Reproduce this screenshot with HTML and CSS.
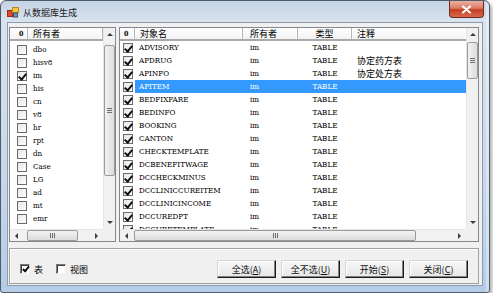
FILE: index.html
```html
<!DOCTYPE html>
<html lang="zh-CN">
<head>
    <meta charset="UTF-8">
    <title>从数据库生成</title>
    <link rel="stylesheet" href="styles.css">
</head>
<body>
    <div class="window">
        <!-- Title bar -->
        <div class="titlebar">
            <svg class="app-icon" width="12" height="11" viewBox="0 0 12 11">
                <rect x="0.5" y="3.5" width="5" height="6" fill="#e0452c" stroke="#9c2a17"/>
                <rect x="5.5" y="0.5" width="6" height="5" fill="#f6c636" stroke="#b78c12"/>
                <rect x="6.5" y="6" width="4" height="4" fill="#6f8fb8" stroke="#40587a"/>
            </svg>
            <span class="title">从数据库生成</span>
            <div class="close-btn">
                <svg width="11" height="9" viewBox="0 0 11 9">
                    <path d="M2 1.5 L9 7.5 M9 1.5 L2 7.5" stroke="#fff" stroke-width="2.2" stroke-linecap="round"/>
                </svg>
            </div>
        </div>

        <div class="client">
            <div class="lists">
                <!-- Owners -->
                <div class="listview owners">
                    <div class="view">
                        <div class="lv-header">
                            <div class="hcol">0</div>
                            <div class="hcol">所有者</div>
                        </div>
                        <div class="lv-body">
                            <div class="lv-row"><span class="cell c-check"><span class="chk"></span></span><span class="cell">dbo</span></div>
                            <div class="lv-row"><span class="cell c-check"><span class="chk"></span></span><span class="cell">hisv8</span></div>
                            <div class="lv-row"><span class="cell c-check"><span class="chk on"></span></span><span class="cell">im</span></div>
                            <div class="lv-row"><span class="cell c-check"><span class="chk"></span></span><span class="cell">his</span></div>
                            <div class="lv-row"><span class="cell c-check"><span class="chk"></span></span><span class="cell">cn</span></div>
                            <div class="lv-row"><span class="cell c-check"><span class="chk"></span></span><span class="cell">v8</span></div>
                            <div class="lv-row"><span class="cell c-check"><span class="chk"></span></span><span class="cell">hr</span></div>
                            <div class="lv-row"><span class="cell c-check"><span class="chk"></span></span><span class="cell">rpt</span></div>
                            <div class="lv-row"><span class="cell c-check"><span class="chk"></span></span><span class="cell">dn</span></div>
                            <div class="lv-row"><span class="cell c-check"><span class="chk"></span></span><span class="cell">Case</span></div>
                            <div class="lv-row"><span class="cell c-check"><span class="chk"></span></span><span class="cell">LG</span></div>
                            <div class="lv-row"><span class="cell c-check"><span class="chk"></span></span><span class="cell">ad</span></div>
                            <div class="lv-row"><span class="cell c-check"><span class="chk"></span></span><span class="cell">mt</span></div>
                            <div class="lv-row"><span class="cell c-check"><span class="chk"></span></span><span class="cell">emr</span></div>
                        </div>
                    </div>
                    <div class="vscroll">
                        <div class="sb-btn up"></div>
                        <div class="sb-track"><div class="thumb v-thumb" style="margin-top: 4px; height: 131px;"><span class="grip"></span></div></div>
                        <div class="sb-btn down"></div>
                    </div>
                    <div class="hscroll">
                        <div class="sb-btn left"></div>
                        <div class="sb-track"><div class="thumb h-thumb" style="margin-left: 4px; width: 51px;"><span class="grip"></span></div></div>
                        <div class="sb-btn right"></div>
                    </div>
                    <div class="corner"></div>
                </div>

                <!-- Objects -->
                <div class="listview objects">
                    <div class="view">
                        <div class="lv-header">
                            <div class="hcol">0</div>
                            <div class="hcol">对象名</div>
                            <div class="hcol">所有者</div>
                            <div class="hcol center">类型</div>
                            <div class="hcol last">注释</div>
                        </div>
                        <div class="lv-body">
                            <div class="lv-row"><span class="cell c-check"><span class="chk on"></span></span><span class="cell">ADVISORY</span><span class="cell">im</span><span class="cell center">TABLE</span><span class="cell"></span></div>
                            <div class="lv-row"><span class="cell c-check"><span class="chk on"></span></span><span class="cell">APDRUG</span><span class="cell">im</span><span class="cell center">TABLE</span><span class="cell cjk">协定药方表</span></div>
                            <div class="lv-row"><span class="cell c-check"><span class="chk on"></span></span><span class="cell">APINFO</span><span class="cell">im</span><span class="cell center">TABLE</span><span class="cell cjk">协定处方表</span></div>
                            <div class="lv-row sel"><span class="cell c-check"><span class="chk on"></span></span><span class="cell">APITEM</span><span class="cell">im</span><span class="cell center">TABLE</span><span class="cell"></span></div>
                            <div class="lv-row"><span class="cell c-check"><span class="chk on"></span></span><span class="cell">BEDFIXFARE</span><span class="cell">im</span><span class="cell center">TABLE</span><span class="cell"></span></div>
                            <div class="lv-row"><span class="cell c-check"><span class="chk on"></span></span><span class="cell">BEDINFO</span><span class="cell">im</span><span class="cell center">TABLE</span><span class="cell"></span></div>
                            <div class="lv-row"><span class="cell c-check"><span class="chk on"></span></span><span class="cell">BOOKING</span><span class="cell">im</span><span class="cell center">TABLE</span><span class="cell"></span></div>
                            <div class="lv-row"><span class="cell c-check"><span class="chk on"></span></span><span class="cell">CANTON</span><span class="cell">im</span><span class="cell center">TABLE</span><span class="cell"></span></div>
                            <div class="lv-row"><span class="cell c-check"><span class="chk on"></span></span><span class="cell">CHECKTEMPLATE</span><span class="cell">im</span><span class="cell center">TABLE</span><span class="cell"></span></div>
                            <div class="lv-row"><span class="cell c-check"><span class="chk on"></span></span><span class="cell">DCBENEFITWAGE</span><span class="cell">im</span><span class="cell center">TABLE</span><span class="cell"></span></div>
                            <div class="lv-row"><span class="cell c-check"><span class="chk on"></span></span><span class="cell">DCCHECKMINUS</span><span class="cell">im</span><span class="cell center">TABLE</span><span class="cell"></span></div>
                            <div class="lv-row"><span class="cell c-check"><span class="chk on"></span></span><span class="cell">DCCLINICCUREITEM</span><span class="cell">im</span><span class="cell center">TABLE</span><span class="cell"></span></div>
                            <div class="lv-row"><span class="cell c-check"><span class="chk on"></span></span><span class="cell">DCCLINICINCOME</span><span class="cell">im</span><span class="cell center">TABLE</span><span class="cell"></span></div>
                            <div class="lv-row"><span class="cell c-check"><span class="chk on"></span></span><span class="cell">DCCUREDPT</span><span class="cell">im</span><span class="cell center">TABLE</span><span class="cell"></span></div>
                            <div class="lv-row"><span class="cell c-check"><span class="chk on"></span></span><span class="cell">DCCURETEMPLATE</span><span class="cell">im</span><span class="cell center">TABLE</span><span class="cell"></span></div>
                        </div>
                    </div>
                    <div class="vscroll">
                        <div class="sb-btn up"></div>
                        <div class="sb-track"><div class="thumb v-thumb" style="margin-top: 1px; height: 37px;"><span class="grip"></span></div></div>
                        <div class="sb-btn down"></div>
                    </div>
                    <div class="hscroll">
                        <div class="sb-btn left"></div>
                        <div class="sb-track"><div class="thumb h-thumb" style="margin-left: 1px; width: 282px;"><span class="grip"></span></div></div>
                        <div class="sb-btn right"></div>
                    </div>
                    <div class="corner"></div>
                </div>
            </div>

            <!-- Options and buttons -->
            <div class="bottom-panel">
                <label class="opt"><span class="box3d on"></span>表</label>
                <label class="opt"><span class="box3d"></span>视图</label>
                <div class="buttons">
                    <button type="button">全选(<u>A</u>)</button>
                    <button type="button">全不选(<u>U</u>)</button>
                    <button type="button">开始(<u>S</u>)</button>
                    <button type="button">关闭(<u>C</u>)</button>
                </div>
            </div>
        </div>
    </div>
</body>
</html>
```

FILE: styles.css
```css
* {
    box-sizing: border-box;
}

body {
    margin: 0;
    background-color: #ffffff;
    font-family: "Noto Sans CJK SC", sans-serif;
    font-size: 9px;
    color: #000;
}

.window {
    width: 490px;
    height: 293px;
    border: 1px solid #505b68;
    border-radius: 6px 6px 3px 3px;
    background: linear-gradient(to bottom, #c4d2e2 0, #d8e3ef 20px, #c9d9eb 55%, #b4cce8 100%);
    box-shadow: 2px 3px 4px rgba(0, 0, 0, 0.35), inset -3px 0 0 rgba(255, 255, 255, 0.35);
    display: flex;
    flex-direction: column;
}

/* Title bar */
.titlebar {
    height: 21px;
    display: flex;
    align-items: center;
    padding-left: 6px;
}

.app-icon {
    margin-top: 2px;
}

.title {
    margin-left: 4px;
    margin-top: 2px;
    font-size: 9px;
    color: #1a1a1a;
}

.close-btn {
    margin-left: auto;
    margin-right: 5px;
    align-self: flex-start;
    width: 35px;
    height: 17px;
    border: 1px solid #6e2b22;
    border-top: none;
    border-radius: 0 0 4px 4px;
    background: linear-gradient(to bottom, #eab1a3 0, #dc7a63 45%, #c53d22 55%, #d9694c 100%);
    display: flex;
    align-items: center;
    justify-content: center;
}

/* Client area */
.client {
    margin: 0 6px;
    height: 264px;
    border: 1px solid #8c9cae;
    background-color: #f0f0f0;
    padding: 4px 3px 1px 1px;
    display: flex;
    flex-direction: column;
}

.lists {
    display: flex;
    gap: 3px;
    height: 215px;
}

.listview {
    border: 1px solid #828790;
    background-color: #fff;
    display: grid;
    grid-template-columns: 1fr 12px;
    grid-template-rows: 1fr 12px;
    overflow: hidden;
}

.owners {
    width: 107px;
}

.objects {
    width: 360px;
}

.view {
    overflow: hidden;
}

.owners .lv-body {
    padding-top: 2px;
}

.lv-header,
.lv-row {
    display: grid;
}

.owners .lv-header,
.owners .lv-row {
    grid-template-columns: 18px 75px;
}

.objects .lv-header,
.objects .lv-row {
    grid-template-columns: 15px 108px 55px 54px 114px;
}

.lv-header {
    height: 13px;
    border-bottom: 2px solid #a9a9a9;
    background: linear-gradient(to bottom, #ffffff, #f3f3f3);
}

.hcol {
    line-height: 11px;
    padding-left: 5px;
    border-right: 1px solid #b5b5b5;
    box-shadow: inset -1px 0 0 #fff;
    white-space: nowrap;
}

.hcol:first-child {
    font-family: "DejaVu Serif Condensed", "DejaVu Serif", serif;
    font-stretch: condensed;
    font-weight: bold;
    font-size: 7px;
    padding-left: 9px;
}

.objects .hcol:first-child {
    padding-left: 4px;
}

.objects .hcol:nth-child(3) {
    padding-left: 7px;
}

.hcol.center {
    text-align: center;
    padding-left: 0;
}

.hcol.last {
    border-right: none;
}

.lv-row {
    height: 13px;
}

.cell {
    font-family: "DejaVu Serif Condensed", "DejaVu Serif", serif;
    font-stretch: condensed;
    font-size: 8px;
    line-height: 13px;
    padding-left: 5px;
    white-space: nowrap;
    overflow: hidden;
    color: #000;
}

.objects .cell:nth-child(2) {
    padding-left: 4px;
}

.objects .cell:nth-child(3) {
    padding-left: 7px;
}

.cell.center {
    text-align: center;
    padding-left: 0;
}

.cell.cjk {
    font-family: "Noto Sans CJK SC", sans-serif;
    font-size: 9px;
    padding-left: 5px;
}

.lv-row.sel .cell:not(.c-check) {
    background-color: #3399ff;
    color: #fff;
}

.c-check {
    display: flex;
    align-items: center;
    padding-left: 7px;
}

.objects .c-check {
    padding-left: 3px;
}

.chk {
    position: relative;
    width: 10px;
    height: 10px;
    border: 1px solid #6b6b6b;
    background: linear-gradient(135deg, #e6e6e6, #ffffff);
}

.chk.on::after {
    content: "";
    position: absolute;
    left: 2px;
    top: 0;
    width: 3px;
    height: 6px;
    border-right: 2px solid #111;
    border-bottom: 2px solid #111;
    transform: rotate(40deg);
}

/* Scroll bars */
.vscroll,
.hscroll {
    display: flex;
    background: #f1f1f1;
}

.vscroll {
    flex-direction: column;
    border-left: 1px solid #e6e6e6;
}

.hscroll {
    border-top: 1px solid #e6e6e6;
}

.sb-btn {
    flex: 0 0 13px;
    display: flex;
    align-items: center;
    justify-content: center;
}

.sb-btn::before {
    content: "";
    border: 3px solid transparent;
}

.sb-btn.up::before {
    border-bottom-color: #3c3c3c;
    border-top-width: 0;
}

.sb-btn.down::before {
    border-top-color: #3c3c3c;
    border-bottom-width: 0;
}

.sb-btn.left::before {
    border-right-color: #3c3c3c;
    border-left-width: 0;
}

.sb-btn.right::before {
    border-left-color: #3c3c3c;
    border-right-width: 0;
}

.sb-track {
    flex: 1;
    display: flex;
}

.vscroll .sb-track {
    flex-direction: column;
}

.thumb {
    border: 1px solid #9b9b9b;
    border-radius: 2px;
    display: flex;
    align-items: center;
    justify-content: center;
}

.v-thumb {
    width: 11px;
    background: linear-gradient(to right, #f2f2f2, #dcdcdc);
}

.h-thumb {
    height: 11px;
    background: linear-gradient(to bottom, #f2f2f2, #dcdcdc);
}

.v-thumb .grip {
    width: 5px;
    height: 5px;
    background: repeating-linear-gradient(to bottom, #6f6f6f 0, #6f6f6f 1px, transparent 1px, transparent 2px);
}

.h-thumb .grip {
    width: 5px;
    height: 5px;
    background: repeating-linear-gradient(to right, #6f6f6f 0, #6f6f6f 1px, transparent 1px, transparent 2px);
}

.corner {
    background: #f0f0f0;
}

/* Bottom panel */
.bottom-panel {
    margin-top: 6px;
    height: 36px;
    border: 1px solid #a0a0a0;
    box-shadow: inset 1px 1px 0 #fff;
    display: flex;
    align-items: center;
    padding: 6px 10px 0 10px;
}

.opt {
    display: flex;
    align-items: center;
    gap: 4px;
    margin-right: 13px;
    font-size: 9px;
}

.box3d {
    position: relative;
    width: 10px;
    height: 10px;
    background: #fff;
    border: 1px solid;
    border-color: #7a7a7a #f4f4f4 #f4f4f4 #7a7a7a;
    box-shadow: inset 1px 1px 0 #404040;
}

.box3d.on::after {
    content: "";
    position: absolute;
    left: 3px;
    top: 0;
    width: 2px;
    height: 5px;
    border-right: 2px solid #111;
    border-bottom: 2px solid #111;
    transform: rotate(40deg);
}

.buttons {
    margin-left: auto;
    display: flex;
    gap: 5px;
}

button {
    width: 59px;
    height: 18px;
    padding: 0;
    font-family: "Noto Sans CJK SC", sans-serif;
    font-size: 9px;
    color: #111;
    background: linear-gradient(to bottom, #f7f7f7, #e6e6e6);
    border: 1px solid;
    border-color: #d6d6d6 #1b1b1b #1b1b1b #d6d6d6;
    box-shadow: inset -1px -1px 0 #808080, inset 1px 1px 0 #fff;
}
```
